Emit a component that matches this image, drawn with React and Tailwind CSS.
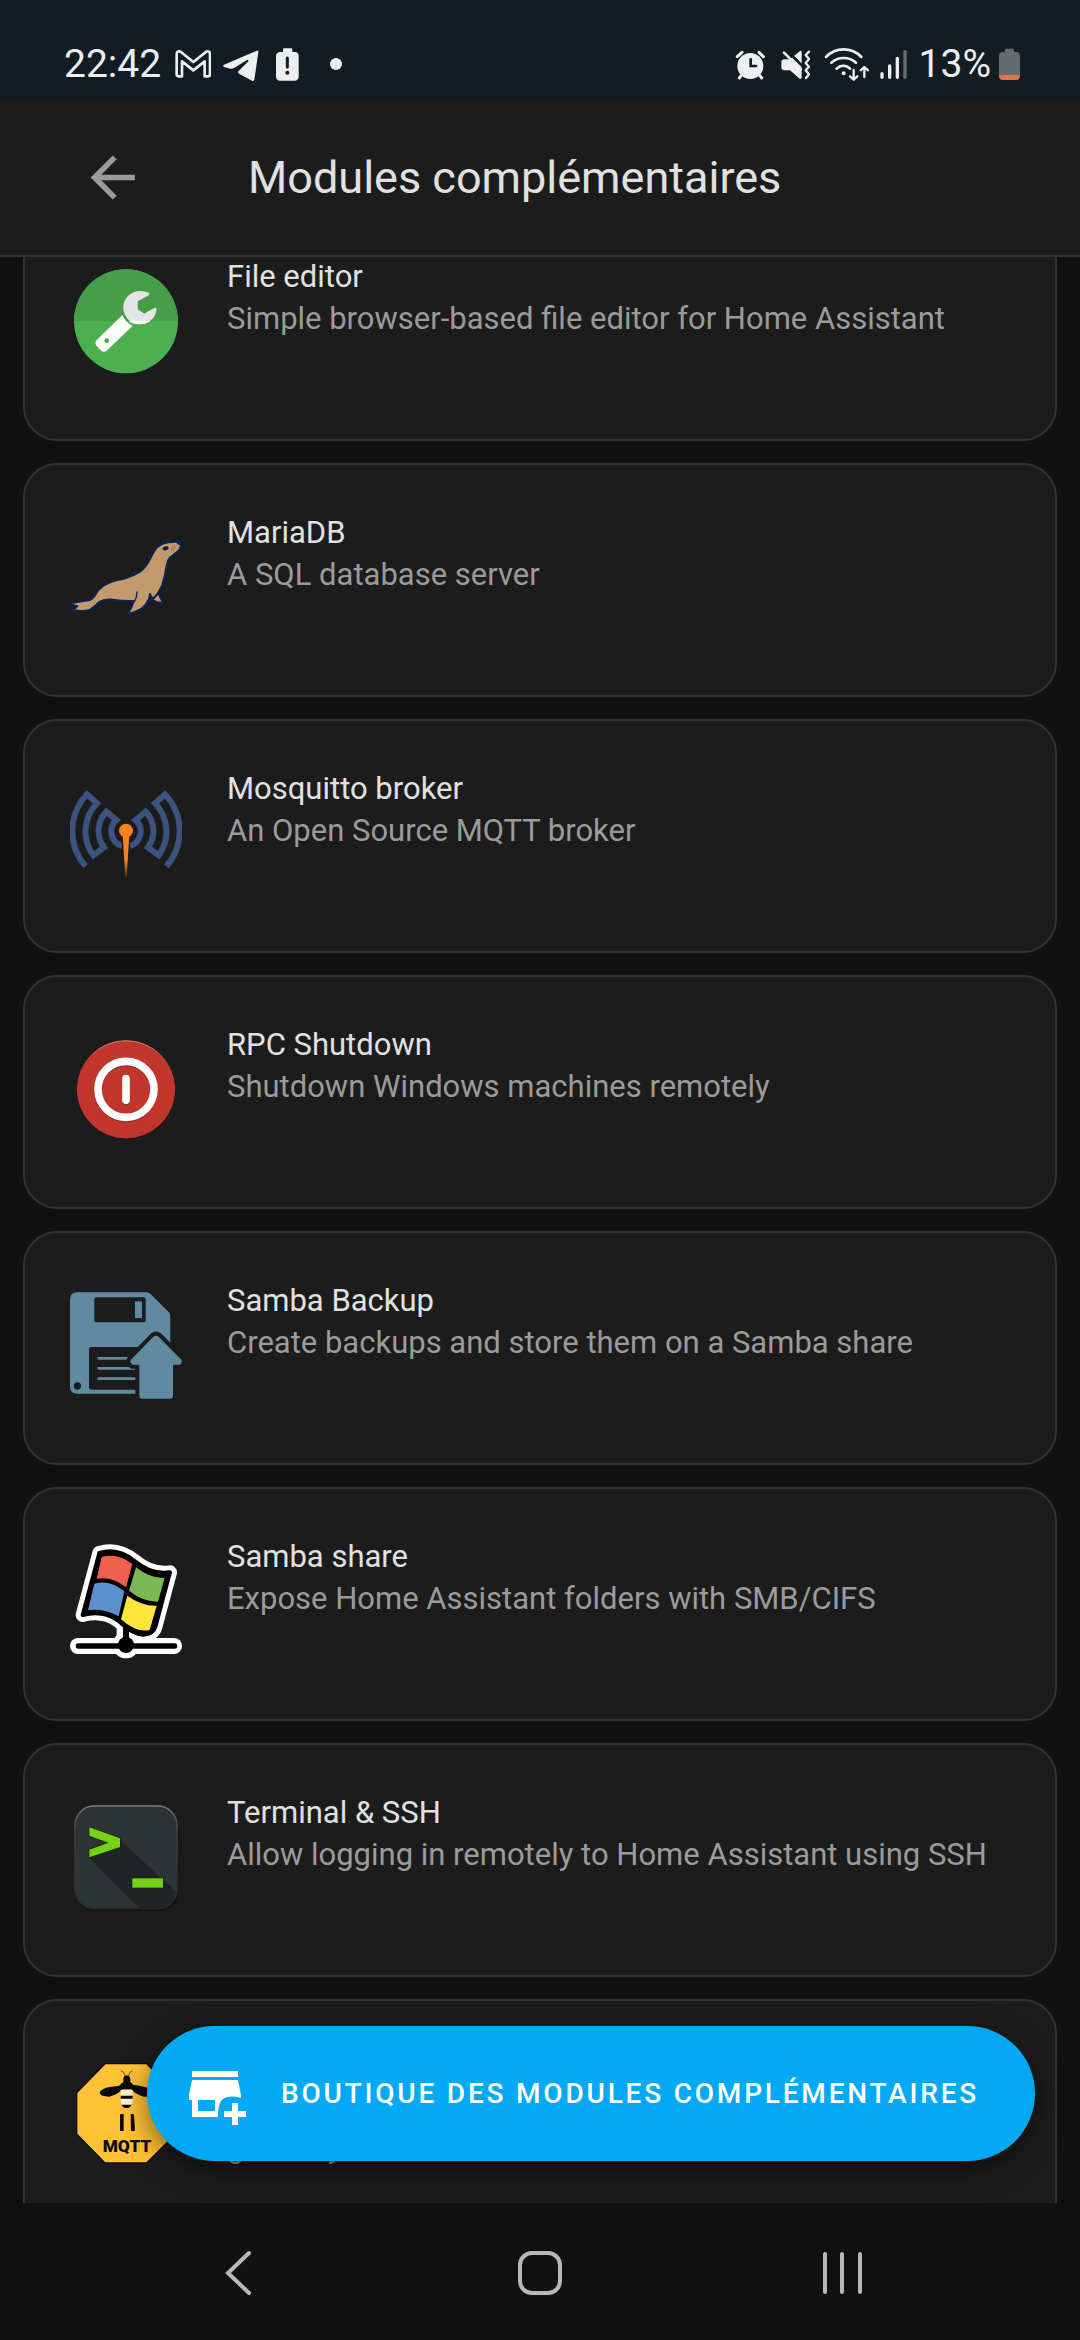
import React from "react";

const GmailIcon = () => (
  <svg viewBox="522 138 108 108" className="size-9" fill="none" stroke="#eceff1" strokeWidth="8" strokeLinejoin="round">
    <path d="M543 229H533Q527 229 527 223V162Q528 151 539 155L577 186L616 155Q626 151 627 162V223Q627 229 621 229H611V184L577 211L543 184Z" />
  </svg>
);

const TelegramIcon = () => (
  <svg viewBox="666 138 108 108" className="size-9" fill="#eceff1">
    <path d="M669 194L768 152Q773 151 772 157L760 239Q758 245 753 242L714 221Q709 217 713 213L742 184Q743 178 738 180L699 204Q694 207 688 206L669 201Q664 197 669 194Z" />
  </svg>
);

const BatteryAlertIcon = () => (
  <svg viewBox="810 138 96 108" className="h-9 w-8" fill="#eceff1">
    <path d="M849 145H871Q874 145 874 149V156H882Q893 157 893 168V230Q892 241 881 242H837Q826 241 825 230V168Q826 157 837 156H846V149Q846 145 849 145Z" />
    <path d="M859 174V201" stroke="#111d22" strokeWidth="9" strokeLinecap="round" />
    <circle cx="859" cy="218" r="6" fill="#111d22" />
  </svg>
);

const DotIcon = () => (
  <svg viewBox="942 138 126 108" className="h-9 w-[42px]" fill="#eceff1">
    <circle cx="1005" cy="192" r="18" />
  </svg>
);

const AlarmIcon = () => (
  <svg viewBox="102 138 108 108" className="size-9" fill="none" stroke="#eceff1" strokeLinecap="round">
    <path d="M112 170L126 157M177 157L190 170" strokeWidth="9" />
    <path d="M124 226L118 234M179 226L185 234" strokeWidth="9" />
    <circle cx="151" cy="198" r="39" fill="#eceff1" stroke="none" />
    <path d="M152 178V198H168" stroke="#111d22" strokeWidth="8" />
  </svg>
);

const MuteVibrateIcon = () => (
  <svg viewBox="234 138 108 108" className="size-9" fill="none">
    <path d="M252 178H270L300 153Q304 151 305 156V232Q304 239 299 236L270 211H252Q244 210 244 202V187Q244 179 252 178Z" fill="#eceff1" />
    <path d="M262 153L309 200" stroke="#111d22" strokeWidth="8" />
    <path d="M252 158L302 208" stroke="#eceff1" strokeWidth="8" strokeLinecap="round" />
    <path d="M327 155L317 165L327 177L317 189L327 200L317 211L327 223L318 234" stroke="#eceff1" strokeWidth="7" strokeLinecap="round" strokeLinejoin="round" />
  </svg>
);

const WifiIcon = () => (
  <svg viewBox="366 138 147 108" className="h-9 w-[49px]" fill="none" stroke="#eceff1" strokeWidth="8" strokeLinecap="round" strokeLinejoin="round">
    <path d="M378 171A73 73 0 0 1 484 171M394 188A56 56 0 0 1 468 188M410 206A27 27 0 0 1 450 206" />
    <circle cx="431" cy="220" r="6" fill="#eceff1" stroke="none" />
    <path d="M461 210V238M450 229L461 239L472 229M493 231V202M482 211L493 201L504 211" strokeWidth="7" />
  </svg>
);

const SignalIcon = () => (
  <svg viewBox="534 138 96 108" className="h-9 w-8" stroke="#eceff1" strokeWidth="10" strokeLinecap="round">
    <path d="M543 221V232M566 198V232M589 175V232" />
    <path d="M612 155V232" stroke="#656d72" />
  </svg>
);

const BatteryIcon = () => (
  <svg viewBox="897 138 63 108" className="h-9 w-[21px]">
    <path d="M918 146H939Q942 146 942 150V156H950Q959 157 960 166V226H897V166Q898 157 907 156H915V150Q915 146 918 146Z" fill="#646c72" />
    <path d="M897 225H960V229Q959 240 949 240H908Q898 240 897 229Z" fill="#e3714a" />
  </svg>
);

const FileEditorIcon = () => (
  <svg viewBox="210 78 336 336" className="size-full">
    <circle cx="378" cy="244" r="156" fill="#4caf50" />
    <path d="M222 244A156 156 0 0 1 534 244Z" fill="#459e48" />
    <path d="M447 158Q432 152 417 153A50 50 0 1 0 469 212Q472 203 465 203L446 213L433 221L413 208V184L446 166Q449 162 447 158Z" fill="#e5e5e5" />
    <path d="M386 243H450Q436 253 418 253Q400 253 386 243Z" fill="#fff" />
    <path d="M367 225L288 302Q284 309 288 316L304 333Q311 338 319 333L398 257Q376 247 367 225Z" fill="#fff" />
    <circle cx="320" cy="302" r="7" fill="#4caf50" />
  </svg>
);

const MariaDbIcon = () => (
  <svg viewBox="90 66 336 336" className="size-full">
    <g fill="#c49a6c" stroke="#0b2452" strokeWidth="6" strokeLinejoin="round">
      <path d="M338 294L355 279Q360 294 370 308Q354 310 340 302Z" />
      <path d="M424 122Q418 122 400 126Q368 126 350 143Q340 156 331 175Q318 202 300 215Q280 228 252 236Q212 243 190 257Q174 268 164 287Q156 299 145 301Q124 304 94 309Q98 317 112 318Q106 325 98 330Q130 336 149 330Q166 318 176 307Q192 297 218 299Q250 304 282 303Q274 326 263 342Q284 338 304 327Q320 314 327 297L330 282Q334 294 341 295Q358 278 366 257Q376 226 380 196Q382 181 390 172Q399 167 407 159Q421 150 422 138Q425 132 424 122Z" />
    </g>
    <path d="M291 276Q291 292 284 304" fill="none" stroke="#0b2452" strokeWidth="4" strokeLinecap="round" />
    <path d="M407 125L425 120L422 136Q414 136 407 125Z" fill="#0b2452" />
    <ellipse cx="377" cy="145" rx="9" ry="6" fill="#101c3c" transform="rotate(-15 377 145)" />
    <path d="M404 133Q392 142 394 154M409 137Q400 144 400 154" fill="none" stroke="#7a6450" strokeWidth="2" />
  </svg>
);

const MosquittoIcon = () => {
  const wave =
    "M137 319A160 160 0 0 1 141 103L171 130A121 121 0 0 0 160 286L192 262A83 83 0 0 1 199 155L229 180A46 46 0 0 0 246 258";
  return (
    <svg viewBox="90 54 336 336" className="size-full">
      <defs>
        <linearGradient id="needle" x1="0" y1="0" x2="0" y2="1">
          <stop offset="0.6" stopColor="#f5811f" />
          <stop offset="1" stopColor="#f5811f" stopOpacity="0.3" />
        </linearGradient>
      </defs>
      <g fill="none" stroke="#3c5280" strokeWidth="18">
        <path d={wave} />
        <path d={wave} transform="matrix(-1 0 0 1 516 0)" />
      </g>
      <path d="M246 225H270V275H246Z" fill="#1c1c1c" />
      <circle cx="258" cy="213" r="25" fill="#1c1c1c" />
      <path d="M248 225H268L260 350H256Z" fill="url(#needle)" />
      <circle cx="258" cy="212" r="21" fill="#f5811f" />
    </svg>
  );
};

const ShutdownIcon = () => (
  <svg viewBox="90 72 336 336" className="size-full">
    <defs>
      <linearGradient id="rim" x1="0" y1="0" x2="0" y2="1">
        <stop offset="0" stopColor="#d9817b" />
        <stop offset="0.3" stopColor="#c1352b" />
      </linearGradient>
    </defs>
    <circle cx="258" cy="240" r="147" fill="#151515" />
    <circle cx="258" cy="238" r="146" fill="#c1352b" stroke="url(#rim)" strokeWidth="3" />
    <g fill="none" strokeWidth="23" strokeLinecap="round">
      <g stroke="#8f2720">
        <circle cx="258" cy="241" r="84" />
        <path d="M258 208V274" />
      </g>
      <g stroke="#fff">
        <circle cx="258" cy="238" r="84" />
        <path d="M258 206V271" />
      </g>
    </g>
  </svg>
);

const SambaBackupIcon = () => (
  <svg viewBox="90 60 336 336" className="size-full">
    <path d="M110 67H320Q327 67 332 72L386 126Q391 131 391 138V280H288V371H110Q91 370 90 351V87Q91 68 110 67Z" fill="#5f8aa0" />
    <rect x="163" y="82" width="154" height="75" rx="6" fill="#1c1c1c" />
    <rect x="285" y="94" width="21" height="50" fill="#5f8aa0" />
    <path d="M153 231H310V359H153Q147 358 147 352V238Q147 232 153 231Z" fill="#1c1c1c" />
    <path d="M176 265H270M176 295H284M176 326H284" stroke="#5f8aa0" strokeWidth="8" strokeLinecap="round" />
    <circle cx="112" cy="348" r="11" fill="#1c1c1c" />
    <path
      d="M340 200Q348 194 356 200L424 269Q429 277 420 284H399V379Q398 386 391 386H305Q298 386 298 379V284H277Q268 277 273 269Z"
      fill="#5f8aa0"
      stroke="#1c1c1c"
      strokeWidth="24"
      paintOrder="stroke"
      strokeLinejoin="round"
    />
  </svg>
);

const SambaShareIcon = () => {
  const flag =
    "M178 98Q232 80 284 122Q334 164 390 156L346 320Q340 341 310 343Q278 342 236 302Q190 268 128 284Z";
  return (
    <svg viewBox="90 77 336 336" className="size-full overflow-visible">
      <g fill="#fff" stroke="#fff" strokeLinecap="round" strokeLinejoin="round">
        <path d={flag} strokeWidth="42" />
        <path d="M114 377H402" strokeWidth="48" />
        <path d="M258 320V360" strokeWidth="56" />
        <circle cx="258" cy="374" r="40" stroke="none" />
      </g>
      <path d="M285 353H340" stroke="#fff" strokeWidth="16" />
      <g fill="#000" stroke="#000" strokeLinecap="round" strokeLinejoin="round">
        <path d={flag} strokeWidth="12" />
        <path d="M115 377H404" strokeWidth="16" />
        <path d="M258 318V374" strokeWidth="18" />
        <circle cx="258" cy="374" r="24" stroke="none" />
      </g>
      <path d="M185 110Q232 96 277 131L258 201Q218 168 170 175Z" fill="#f0604d" />
      <path d="M288 141Q330 175 374 173L354 244Q308 244 267 211Z" fill="#7cb954" />
      <path d="M163 190Q210 177 253 213L236 288Q192 262 144 270Z" fill="#5b8fcd" />
      <path d="M262 226Q304 257 350 256L329 329Q288 338 243 297Z" fill="#ffe43d" />
    </svg>
  );
};

const TerminalIcon = () => (
  <svg viewBox="90 66 336 336" className="size-full">
    <defs>
      <clipPath id="screen">
        <rect x="103" y="76" width="310" height="312" rx="60" />
      </clipPath>
      <linearGradient id="bezel" x1="0" y1="0" x2="0" y2="1">
        <stop offset="0" stopColor="#74797b" />
        <stop offset="0.25" stopColor="#3c4143" />
        <stop offset="1" stopColor="#23282a" />
      </linearGradient>
    </defs>
    <rect x="105" y="81" width="310" height="312" rx="60" fill="#101112" />
    <rect x="103" y="76" width="310" height="312" rx="60" fill="#2e3335" />
    <path d="M240 180L420 346V400H314L148 234Z" fill="#212425" clipPath="url(#screen)" />
    <rect x="105" y="78" width="306" height="308" rx="58" fill="none" stroke="url(#bezel)" strokeWidth="4" />
    <g fill="#73d216" stroke="#16230c" strokeWidth="4" paintOrder="stroke">
      <path d="M148 142L240 175V201L148 232V209L205 188L148 167Z" />
      <path d="M277 295H369V323H277Z" />
    </g>
  </svg>
);

const ZigbeeIcon = () => (
  <svg viewBox="210 234 336 336" className="size-full">
    <path d="M315 251H440L527 338V462L440 549H315L230 462V338Z" fill="#ffc135" stroke="#0c0c0c" strokeWidth="4" />
    <path d="M376 288Q374 274 362 272M385 288Q388 274 398 272" fill="none" stroke="#3a2c10" strokeWidth="2" />
    <path d="M370 306Q368 287 380 286Q393 287 391 306Q396 310 401 315Q455 322 462 337Q456 352 430 350Q408 344 394 328H367Q350 346 328 350Q300 350 299 337Q306 321 358 317Q364 310 370 306Z" fill="#0a0a0a" />
    <path d="M362 330H398V364Q394 382 380 384Q366 382 362 364Z" fill="#fff3d6" />
    <path d="M362 347H398V356H362ZM365 374H395Q390 384 380 384Q369 384 365 374Z" fill="#0a0a0a" />
    <path d="M360 403L371 402V453H360ZM392 402L402 403L405 453H393Z" fill="#0a0a0a" />
    <text x="308" y="516" fontSize="52" className="font-black" fill="#0a0a0a">
      MQTT
    </text>
  </svg>
);

const addons = [
  { name: "File editor", description: "Simple browser-based file editor for Home Assistant", Icon: FileEditorIcon },
  { name: "MariaDB", description: "A SQL database server", Icon: MariaDbIcon },
  { name: "Mosquitto broker", description: "An Open Source MQTT broker", Icon: MosquittoIcon },
  { name: "RPC Shutdown", description: "Shutdown Windows machines remotely", Icon: ShutdownIcon },
  { name: "Samba Backup", description: "Create backups and store them on a Samba share", Icon: SambaBackupIcon },
  { name: "Samba share", description: "Expose Home Assistant folders with SMB/CIFS", Icon: SambaShareIcon },
  { name: "Terminal & SSH", description: "Allow logging in remotely to Home Assistant using SSH", Icon: TerminalIcon },
  { name: "Zigbee2MQTT", description: "Use your Zigbee devices without the vendor's bridge or gateway", Icon: ZigbeeIcon },
];

const StatusBar = () => (
  <div className="flex h-[99px] shrink-0 items-center justify-between bg-[#111d22] pt-[29px] pr-[60px] pl-[64px] text-[39px] leading-none text-[#eceff1]">
    <div className="flex items-center gap-3">
      <span className="mr-0.5">22:42</span>
      <GmailIcon />
      <TelegramIcon />
      <BatteryAlertIcon />
      <DotIcon />
    </div>
    <div className="flex items-center gap-2">
      <AlarmIcon />
      <MuteVibrateIcon />
      <WifiIcon />
      <SignalIcon />
      <span>13%</span>
      <BatteryIcon />
    </div>
  </div>
);

const Header = () => (
  <header className="flex h-[158px] shrink-0 items-center gap-[102px] border-b-2 border-[#333333] bg-[#1c1c1c] pl-[79px]">
    <button type="button" aria-label="Retour">
      <svg viewBox="0 0 24 24" className="size-[67px]" fill="#9b9b9b">
        <path d="M20,11V13H8L13.5,18.5L12.08,19.92L4.16,12L12.08,4.08L13.5,5.5L8,11H20Z" />
      </svg>
    </button>
    <h1 className="text-[45px] leading-none text-[#e1e1e1]">Modules complémentaires</h1>
  </header>
);

const AddonCard = ({ name, description, Icon }) => (
  <li className="flex min-h-[234px] items-start gap-[45px] rounded-[34px] border-2 border-[#333333] bg-[#1c1c1c] px-[45px] pt-[47px]">
    <div className="mt-[10px] size-28 shrink-0">
      <Icon />
    </div>
    <div className="flex flex-col gap-[3px] text-[31px]">
      <h2 className="leading-[41px] text-[#e1e1e1]">{name}</h2>
      <p className="leading-[37px] text-[#9b9b9b]">{description}</p>
    </div>
  </li>
);

const StoreButton = () => (
  <button
    type="button"
    className="absolute right-[45px] bottom-[42px] flex h-[135px] items-center gap-[35px] rounded-full bg-[#03a9f4] pr-14 pl-[42px] text-[28px] font-medium tracking-widest whitespace-nowrap text-white uppercase shadow-[0_8px_28px_rgba(0,0,0,0.5)]"
  >
    <svg viewBox="0 -11 57 67" className="h-[67px] w-[57px]" fill="#fff">
      <path d="M3 0H49V6H3Z" />
      <path fillRule="evenodd" d="M3 9H49L52 24V27Q38 23 32 30Q29 35 29 46H3V29H0V24ZM9 29V40H26V29Z" />
      <path d="M43 32H49V40H57V46H49V54H43V46H35V40H43Z" />
    </svg>
    Boutique des modules complémentaires
  </button>
);

const NavBar = () => (
  <nav className="grid h-[137px] shrink-0 grid-cols-3 place-items-center bg-[#111111] px-[87px] pt-0.5">
    <button type="button" aria-label="Précédent">
      <svg viewBox="0 0 44 46" className="h-[46px] w-11" fill="none" stroke="#b8b8b8" strokeWidth="4" strokeLinecap="round">
        <path d="M33 3L12 23L33 43" />
      </svg>
    </button>
    <button type="button" aria-label="Accueil">
      <svg viewBox="0 0 44 44" className="size-11" fill="none" stroke="#b8b8b8" strokeWidth="4">
        <rect x="2" y="2" width="40" height="40" rx="12" />
      </svg>
    </button>
    <button type="button" aria-label="Applications récentes">
      <svg viewBox="0 0 44 44" className="size-11" stroke="#b8b8b8" strokeWidth="4" strokeLinecap="round">
        <path d="M5 3V41M22 3V41M40 3V41" />
      </svg>
    </button>
  </nav>
);

const App = () => {
  return (
    <div className="flex h-screen flex-col overflow-hidden bg-[#111111] font-['Roboto',sans-serif]">
      <StatusBar />
      <Header />
      <main className="relative min-h-0 flex-1 overflow-hidden">
        {/* list is scrolled a little under the header */}
        <ul className="-mt-[50px] flex flex-col gap-[22px] px-[23px]">
          {addons.map((addon) => (
            <AddonCard key={addon.name} {...addon} />
          ))}
        </ul>
        <StoreButton />
      </main>
      <NavBar />
    </div>
  );
};

export default App;
